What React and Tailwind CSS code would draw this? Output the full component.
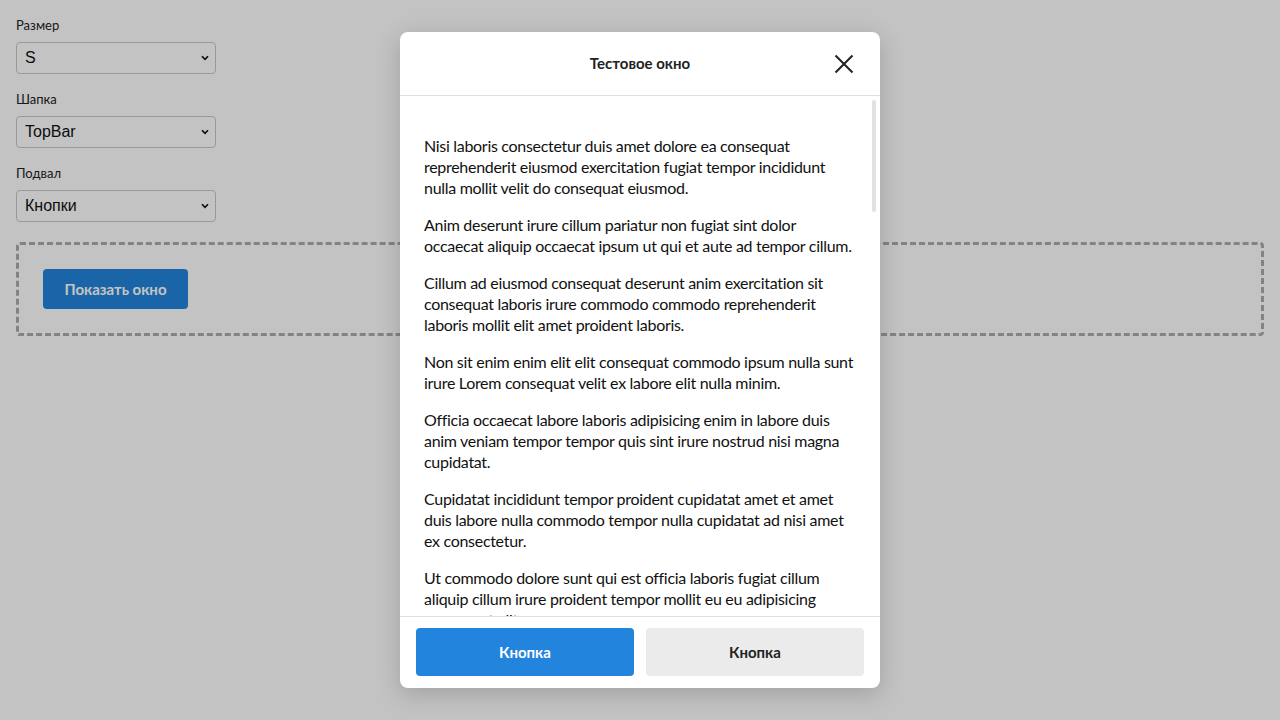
import React from "react";

const paragraphs = [
  [
    "Nisi laboris consectetur duis amet dolore ea consequat",
    "reprehenderit eiusmod exercitation fugiat tempor incididunt",
    "nulla mollit velit do consequat eiusmod.",
  ],
  [
    "Anim deserunt irure cillum pariatur non fugiat sint dolor",
    "occaecat aliquip occaecat ipsum ut qui et aute ad tempor cillum.",
  ],
  [
    "Cillum ad eiusmod consequat deserunt anim exercitation sit",
    "consequat laboris irure commodo commodo reprehenderit",
    "laboris mollit elit amet proident laboris.",
  ],
  [
    "Non sit enim enim elit elit consequat commodo ipsum nulla sunt",
    "irure Lorem consequat velit ex labore elit nulla minim.",
  ],
  [
    "Officia occaecat labore laboris adipisicing enim in labore duis",
    "anim veniam tempor tempor quis sint irure nostrud nisi magna",
    "cupidatat.",
  ],
  [
    "Cupidatat incididunt tempor proident cupidatat amet et amet",
    "duis labore nulla commodo tempor nulla cupidatat ad nisi amet",
    "ex consectetur.",
  ],
  [
    "Ut commodo dolore sunt qui est officia laboris fugiat cillum",
    "aliquip cillum irure proident tempor mollit eu eu adipisicing",
    "consequat elit.",
  ],
  [
    "Velit esse nostrud aliqua dolor in culpa ex tempor ullamco",
    "esse consequat.",
  ],
];

const FONT = "font-['Lato','Open_Sans',sans-serif]";

function Field({ label, value, options }) {
  return (
    <div className="flex flex-col">
      <div className="h-[18px] text-[13px] leading-[18px] text-[#222] mb-2">{label}</div>
      <div className="relative w-[200px] h-8">
        <select
          defaultValue={value}
          className="appearance-none w-[200px] h-8 border border-[#c9c9c9] rounded-[4px] bg-white pl-2 pr-6 text-[16px] text-[#111] font-['Liberation_Sans',Arial,sans-serif]"
        >
          {options.map((o) => (
            <option key={o}>{o}</option>
          ))}
        </select>
        <svg
          className="absolute right-[7px] top-[13px] pointer-events-none"
          width="8"
          height="6"
          viewBox="0 0 8 6"
          fill="none"
          stroke="#111"
          strokeWidth="1.6"
        >
          <path d="M1 1.2 L4 4.4 L7 1.2" />
        </svg>
      </div>
    </div>
  );
}

export default function App() {
  return (
    <div className={`relative w-full h-[720px] bg-white overflow-hidden ${FONT}`}>
      <div className="flex flex-col gap-4 px-4 pt-4">
        <Field label="Размер" value="S" options={["S", "M", "L"]} />
        <Field label="Шапка" value="TopBar" options={["TopBar", "None"]} />
        <Field label="Подвал" value="Кнопки" options={["Кнопки", "None"]} />
        <div className="mt-1 border-[3px] border-dashed border-[#acacac] rounded-[4px] p-6">
          <button className="w-[145px] h-10 rounded-[4px] bg-[#2285dc] text-white text-[15px] font-bold">
            Показать окно
          </button>
        </div>
      </div>

      <div className="absolute inset-0 bg-[rgba(0,0,0,0.235)] flex items-center justify-center">
        <div className="w-[480px] h-[656px] bg-white rounded-lg shadow-[0_6px_24px_rgba(0,0,0,0.18)] flex flex-col overflow-hidden">
          <div className="h-16 shrink-0 border-b border-[#e0e0e0] grid grid-cols-[1fr_auto_1fr] items-center">
            <div />
            <div className="text-[15px] font-bold text-[#222]">Тестовое окно</div>
            <div className="flex justify-end pr-[26px]">
              <svg width="20" height="20" viewBox="0 0 20 20" fill="none" stroke="#222" strokeWidth="2" strokeLinecap="butt">
                <path d="M1.5 1.5 L18.5 18.5 M18.5 1.5 L1.5 18.5" />
              </svg>
            </div>
          </div>

          <div className="relative flex-1 overflow-hidden">
            <div className="px-6 pt-[39px] text-[16px] leading-[21px] tracking-[-0.3px] text-[#111]">
              {paragraphs.map((p, i) => (
                <p key={i} className="mb-4">
                  {p.map((line, j) => (
                    <span key={j} className="block whitespace-nowrap">
                      {line}
                    </span>
                  ))}
                </p>
              ))}
            </div>
            <div className="absolute right-1 top-1 w-1 h-[112px] rounded-full bg-[#e2e2e2]" />
          </div>

          <div className="shrink-0 border-t border-[#e0e0e0] px-4 pt-[11px] pb-3 flex gap-3">
            <button className="flex-1 h-12 rounded-[4px] bg-[#2284dc] text-white text-[15px] font-bold">
              Кнопка
            </button>
            <button className="flex-1 h-12 rounded-[4px] bg-[#ebebeb] text-[#222] text-[15px] font-bold">
              Кнопка
            </button>
          </div>
        </div>
      </div>
    </div>
  );
}
